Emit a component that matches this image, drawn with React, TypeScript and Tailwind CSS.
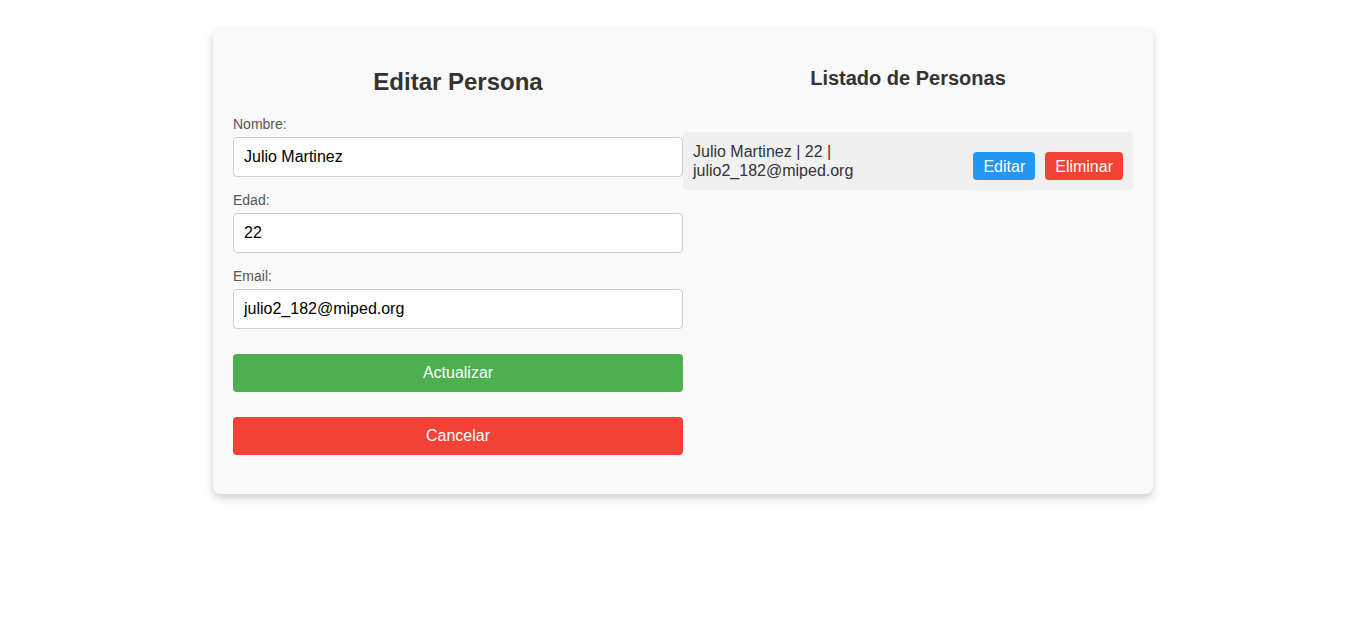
import React from 'react';

const font = { fontFamily: '"Liberation Sans", Arial, sans-serif' };

interface Field {
  label: string;
  value: string;
}

const fields: Field[] = [
  { label: 'Nombre:', value: 'Julio Martinez' },
  { label: 'Edad:', value: '22' },
  { label: 'Email:', value: 'julio2_182@miped.org' },
];

export default function App() {
  return (
    <div className="min-h-screen bg-white pt-[28px]" style={font}>
      <div className="mx-auto flex w-[940px] rounded-lg bg-[#f9f9f9] p-5 shadow-[0_4px_8px_rgba(0,0,0,0.2)]">
        {/* Form */}
        <div className="w-[450px] shrink-0">
          <h2 className="mt-[20px] mb-[20px] text-center text-[24px] leading-[28px] font-bold text-[#333]">
            Editar Persona
          </h2>
          {fields.map((f) => (
            <div key={f.label} className="mb-[15px]">
              <label className="mb-[5px] block text-[14px] leading-[16px] text-[#555]">
                {f.label}
              </label>
              <input
                defaultValue={f.value}
                className="block h-[40px] w-full rounded-[4px] border border-[#ccc] bg-white px-[10px] text-[16px] text-black outline-none"
              />
            </div>
          ))}
          <button className="mt-[25px] block h-[38px] w-full rounded-[4px] bg-[#4caf50] text-[16px] text-white">
            Actualizar
          </button>
          <button className="mt-[25px] mb-[19px] block h-[38px] w-full rounded-[4px] bg-[#f44336] text-[16px] text-white">
            Cancelar
          </button>
        </div>

        {/* List */}
        <div className="w-[450px] shrink-0">
          <h3 className="mt-[19px] mb-[42px] text-center text-[20px] leading-[23px] font-bold text-[#333]">
            Listado de Personas
          </h3>
          <div className="flex justify-between rounded-[4px] bg-[#f0f0f0] p-[10px] text-[16px] leading-[19px] text-[#333]">
            <span className="w-[230px]">Julio Martinez | 22 | julio2_182@miped.org</span>
            <div className="flex gap-[10px] self-end">
              <button className="h-[28px] rounded-[4px] bg-[#2196f3] px-[10px] text-[16px] text-white">
                Editar
              </button>
              <button className="h-[28px] rounded-[4px] bg-[#f44336] px-[10px] text-[16px] text-white">
                Eliminar
              </button>
            </div>
          </div>
        </div>
      </div>
    </div>
  );
}
